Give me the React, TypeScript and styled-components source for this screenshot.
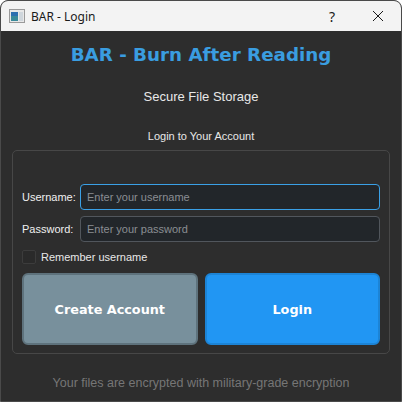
import React from "react";
import styled, { createGlobalStyle } from "styled-components";

const Global = createGlobalStyle`
  html, body { margin: 0; padding: 0; background: #ffffff; }
  * { box-sizing: border-box; }
`;

const Window = styled.div`
  width: 402px;
  height: 402px;
  display: flex;
  flex-direction: column;
  border: 1px solid #4a4a4a;
  border-radius: 8px 8px 0 0;
  overflow: hidden;
  background: #2d2d2d;
  font-family: "Liberation Sans", Arial, sans-serif;
`;

const TitleBar = styled.div`
  height: 30px;
  flex: none;
  background: #f3f3f3;
  display: flex;
  align-items: center;
  padding: 0 0 0 8px;
  font-family: "Noto Sans", "Open Sans", sans-serif;
  font-size: 12px;
  color: #1a1a1a;
`;

const AppIcon = styled.svg`
  width: 16px;
  height: 14px;
  margin-right: 6px;
`;

const TitleText = styled.span`
  flex: 1;
`;

const TitleButton = styled.div`
  width: 46px;
  height: 30px;
  display: flex;
  align-items: center;
  justify-content: center;
  font-size: 14px;
`;

const Body = styled.div`
  flex: 1;
  display: flex;
  flex-direction: column;
  padding: 0 11px;
  color: #e8e8e8;
`;

const Heading = styled.h1`
  margin: 0;
  height: 48px;
  line-height: 48px;
  text-align: center;
  font-family: "DejaVu Sans", Verdana, sans-serif;
  font-size: 18.3px;
  font-weight: bold;
  color: #3a9de0;
`;

const Subtitle = styled.div`
  height: 36px;
  line-height: 36px;
  text-align: center;
  font-size: 13px;
`;

const Section = styled.div`
  height: 35px;
  padding-top: 7px;
  line-height: 28px;
  text-align: center;
  font-size: 11px;
`;

const Group = styled.div`
  border: 1px solid #474747;
  border-radius: 5px;
  padding: 33px 9px 8px 9px;
  display: flex;
  flex-direction: column;
`;

const FormGrid = styled.div`
  display: grid;
  grid-template-columns: 58px 1fr;
  row-gap: 6px;
  align-items: center;
`;

const Label = styled.label`
  font-size: 11px;
  color: #f0f0f0;
`;

const Input = styled.input<{ $focus?: boolean }>`
  height: 26px;
  border-radius: 4px;
  border: 1px solid ${(p) => (p.$focus ? "#3aa0e6" : "#51565c")};
  background: #22262a;
  color: #e0e0e0;
  padding: 0 6px;
  font-family: "Liberation Sans", Arial, sans-serif;
  font-size: 11px;
  outline: none;
  &::placeholder { color: #8a8e93; }
`;

const CheckRow = styled.div`
  display: flex;
  align-items: center;
  gap: 5px;
  margin-top: 8px;
  font-size: 11px;
`;

const Box = styled.span`
  width: 14px;
  height: 14px;
  border: 1px solid #3c3c3c;
  background: #2a2a2a;
  border-radius: 2px;
`;

const Buttons = styled.div`
  display: grid;
  grid-template-columns: 1fr 1fr;
  gap: 7px;
  margin-top: 9px;
`;

const Button = styled.button<{ $primary?: boolean }>`
  height: 72px;
  border-radius: 6px;
  border: 2px solid ${(p) => (p.$primary ? "#1c84d6" : "#5e727c")};
  background: ${(p) => (p.$primary ? "#2196f3" : "#78909c")};
  color: #ffffff;
  font-family: "DejaVu Sans", Verdana, sans-serif;
  font-weight: bold;
  font-size: 12.8px;
`;

const Footer = styled.div`
  margin-top: 19px;
  line-height: 20px;
  text-align: center;
  font-size: 12.5px;
  color: #767676;
`;

export default function App() {
  return (
    <>
      <Global />
      <Window>
        <TitleBar>
          <AppIcon viewBox="0 0 16 14">
            <rect x="0.5" y="0.5" width="15" height="13" fill="#e8e8e8" stroke="#9a9a9a" />
            <rect x="2" y="3" width="7" height="9" fill="#3a8a9a" />
            <rect x="2" y="3" width="7" height="4" fill="#2c6fb0" />
            <rect x="10" y="3" width="4" height="9" fill="#cfd6dc" />
          </AppIcon>
          <TitleText>BAR - Login</TitleText>
          <TitleButton>?</TitleButton>
          <TitleButton>
            <svg width="12" height="12" viewBox="0 0 12 12">
              <path d="M1 1 L11 11 M11 1 L1 11" stroke="#1a1a1a" strokeWidth="1" />
            </svg>
          </TitleButton>
        </TitleBar>
        <Body>
          <Heading>BAR - Burn After Reading</Heading>
          <Subtitle>Secure File Storage</Subtitle>
          <Section>Login to Your Account</Section>
          <Group>
            <FormGrid>
              <Label>Username:</Label>
              <Input $focus placeholder="Enter your username" />
              <Label>Password:</Label>
              <Input type="password" placeholder="Enter your password" />
            </FormGrid>
            <CheckRow>
              <Box />
              <span>Remember username</span>
            </CheckRow>
            <Buttons>
              <Button>Create Account</Button>
              <Button $primary>Login</Button>
            </Buttons>
          </Group>
          <Footer>Your files are encrypted with military-grade encryption</Footer>
        </Body>
      </Window>
    </>
  );
}
